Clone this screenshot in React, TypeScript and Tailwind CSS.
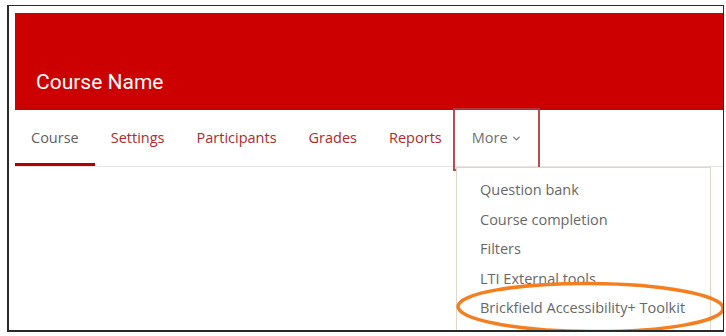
import React from 'react';
import { ChevronDown } from 'lucide-react';

const tabs = ['Course', 'Settings', 'Participants', 'Grades', 'Reports'];
const moreItems = [
  'Question bank',
  'Course completion',
  'Filters',
  'LTI External tools',
  'Brickfield Accessibility+ Toolkit',
];

export default function App() {
  return (
    <div className="w-[726px] h-[336px] bg-white pt-[5px] pl-[7px]">
      <div className="relative w-[717px] h-[327px] border-t border-r border-l-2 border-b-2 border-[#2a2a2a] overflow-hidden bg-white pt-[7px] pl-[6px]">
        {/* Header */}
        <div className="h-[97px] bg-[#cc0000] flex items-end pl-[21px] pb-[17px]">
          <h1 className="text-white text-[21px] leading-none font-['Roboto',sans-serif]">Course Name</h1>
        </div>

        {/* Tabs */}
        <nav className="flex h-[57px] border-b border-[#e6e6e6] font-['Open_Sans',sans-serif] text-[14.5px]">
          {tabs.map((t, i) => (
            <div
              key={t}
              className={
                i === 0
                  ? 'flex items-center px-4 text-[#5f5f5f] border-b-[3px] border-[#b30000] pt-[3px]'
                  : 'flex items-center px-4 text-[#ad2b2b]'
              }
            >
              {t}
            </div>
          ))}
          <div className="flex items-center pl-[14px] pr-[16px] text-[#707070]">
            More
            <ChevronDown className="w-[11px] h-[11px] ml-[3px] mt-[1px]" strokeWidth={2.5} />
          </div>
        </nav>

        {/* Highlight box around More */}
        <div className="absolute left-[444px] top-[102px] w-[87px] h-[63px] border-[2.5px] border-[#b2393d]/90" />

        {/* Dropdown */}
        <div className="absolute left-[447px] top-[161px] w-[255px] h-[180px] bg-white border border-[#e2d6c8] pt-[7px] pl-[23px] font-['Open_Sans',sans-serif] text-[14.5px] text-[#686868]">
          {moreItems.map((m) => (
            <div key={m} className="leading-[29.5px] whitespace-nowrap">
              {m}
            </div>
          ))}
        </div>

        {/* Orange annotation ellipse */}
        <svg className="absolute left-[440px] top-[270px]" width="290" height="70" viewBox="0 0 290 70">
          <ellipse cx="141.5" cy="31.5" rx="132.5" ry="24" fill="none" stroke="#f47e20" strokeWidth="3.5" transform="rotate(0.4 141.5 31.5)" />
        </svg>
      </div>
    </div>
  );
}
